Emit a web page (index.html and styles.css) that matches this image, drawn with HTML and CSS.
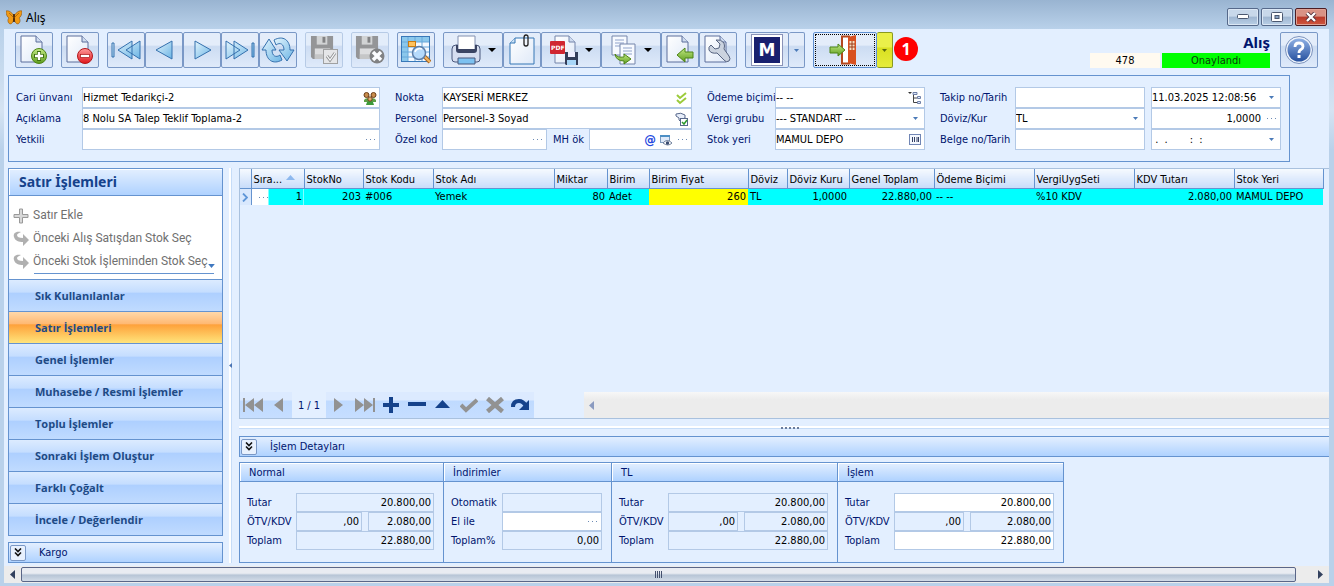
FILE: index.html
```html
<!DOCTYPE html>
<html lang="tr">
<head>
<meta charset="utf-8">
<title>Alış</title>
<meta name="viewport" content="width=device-width, initial-scale=1">
<link rel="stylesheet" href="styles.css">
</head>
<body>
<svg class="defs" aria-hidden="true">
  <defs>
    <linearGradient id="gBlue" x1="0" y1="0" x2="1" y2="1"><stop offset="0" stop-color="#e4f5fd"/><stop offset="1" stop-color="#6bb4e4"/></linearGradient>
    <linearGradient id="gPage" x1="0" y1="0" x2="1" y2="1"><stop offset="0" stop-color="#ffffff"/><stop offset="1" stop-color="#dfe9f8"/></linearGradient>
    <linearGradient id="gGreen" x1="0" y1="0" x2="0" y2="1"><stop offset="0" stop-color="#c3ea85"/><stop offset="1" stop-color="#5d9c1d"/></linearGradient>
    <linearGradient id="gRed" x1="0" y1="0" x2="0" y2="1"><stop offset="0" stop-color="#ff9a9a"/><stop offset="1" stop-color="#e0151b"/></linearGradient>
    <linearGradient id="gHelp" x1="0" y1="0" x2="0" y2="1"><stop offset="0" stop-color="#8fb0e4"/><stop offset="1" stop-color="#27519f"/></linearGradient>
    <symbol id="down" viewBox="0 0 5 3"><path d="M0 0h5L2.500 3z" fill="currentColor"/></symbol>
    <symbol id="page" viewBox="0 0 24 30"><path d="M1 1h15l6 6v20H1z" fill="url(#gPage)" stroke="#5c6f9c"/><path d="M16 1v6h6" fill="#cfdcf0" stroke="#5c6f9c"/></symbol>
    <symbol id="floppy" viewBox="0 0 26 26"><path d="M1 1h23v24H3l-2-2z" fill="#8c8c8c"/><path d="M7 1h11v9H7z" fill="#d0d0d0"/><path d="M13 2h3v6h-3z" fill="#777"/><path d="M5 14h16v11H5z" fill="#dcdcdc"/><path d="M5 20h16v5H5z" fill="#c2c2c2"/></symbol>
    <symbol id="chev" viewBox="0 0 8 9"><path d="M1 .5l3 3 3-3M1 4.500l3 3 3-3" fill="none" stroke="#111" stroke-width="1.600"/></symbol>
    <symbol id="redo" viewBox="0 0 16 16"><path d="M8 1C2 0 0 3 1 6c1 4 5 5 9 5v4l6-6-6-6v4C6 7 4 6 4 4c0-1 2-2 4-3z" fill="#b0b0b0"/></symbol>
  </defs>
</svg>

<div class="window">
  <header class="titlebar">
    <svg class="logo" width="16" height="15" viewBox="0 0 16 15"><path d="M8 6C6 2 2 0 0 1c0 3 1 6 3 7-2 2-1 5 1 6 2 0 3-2 4-5 1 3 2 5 4 5 2-1 3-4 1-6 2-1 3-4 3-7-2-1-6 1-8 5z" fill="#f09a16" stroke="#7a4206" stroke-width=".5"/><path d="M8 4v8" stroke="#3a1c04" stroke-width="1.600"/><path d="M8 8L3 3M8 8l5-5" stroke="#8a4c08" stroke-width=".6"/></svg>
    <h1 class="caption">Alış</h1>
    <div class="winbtns">
      <button class="winbtn" aria-label="Simge durumuna küçült"><svg width="12" height="6" viewBox="0 0 12 6"><rect x=".5" y=".5" width="11" height="4" rx="1" fill="#fff" stroke="#4b5870"/></svg></button>
      <button class="winbtn" aria-label="Ekranı kapla"><svg width="12" height="10" viewBox="0 0 12 10"><rect x=".5" y=".5" width="11" height="9" rx="1" fill="#fff" stroke="#4b5870"/><rect x="4" y="3.500" width="4" height="3" fill="#8aa3c4" stroke="#4b5870"/></svg></button>
      <button class="winbtn close" aria-label="Kapat"><svg width="12" height="10" viewBox="0 0 12 10"><path d="M2 1l8 8M10 1L2 9" stroke="#55303a" stroke-width="4"/><path d="M2 1l8 8M10 1L2 9" stroke="#fff" stroke-width="2.400"/></svg></button>
    </div>
  </header>

  <main class="client">
    <div class="toolbar">
      <button class="tool" aria-label="Yeni"><svg width="28" height="30" viewBox="0 0 28 30"><use href="#page" width="24" height="30"/><circle cx="19" cy="21" r="7.500" fill="url(#gGreen)" stroke="#4d8416"/><path d="M19 16v10M14 21h10" stroke="#3f7010" stroke-width="4"/><path d="M19 17v8M15 21h8" stroke="#fff" stroke-width="2.400"/></svg></button>
      <button class="tool" aria-label="Sil"><svg width="28" height="30" viewBox="0 0 28 30"><use href="#page" width="24" height="30"/><circle cx="19" cy="21" r="7.500" fill="url(#gRed)" stroke="#b3181c"/><rect x="14.500" y="19.500" width="9" height="3" fill="#fff" stroke="#a51518" stroke-width=".7"/></svg></button>
      <div class="group">
        <button class="tool" aria-label="İlk kayıt"><svg width="32" height="20" viewBox="0 0 32 20"><g fill="url(#gBlue)" stroke="#3571ae"><path d="M2 3h2v14H2zM22 1v18L8 10zM30 1v18l-14-9z"/></g></svg></button>
        <button class="tool" aria-label="Önceki kayıt"><svg width="20" height="20" viewBox="0 0 20 20"><path d="M18 1v18L2 10z" fill="url(#gBlue)" stroke="#3571ae"/></svg></button>
        <button class="tool" aria-label="Sonraki kayıt"><svg width="20" height="20" viewBox="0 0 20 20"><path d="M3 1v18l16-9z" fill="url(#gBlue)" stroke="#3571ae"/></svg></button>
        <button class="tool" aria-label="Son kayıt"><svg width="32" height="20" viewBox="0 0 32 20"><g fill="url(#gBlue)" stroke="#3571ae"><path d="M28 3h2v14h-2zM10 1v18l14-9zM2 1v18l14-9z"/></g></svg></button>
        <button class="tool" aria-label="Yenile"><svg width="34" height="28" viewBox="0 0 34 28"><g fill="url(#gBlue)" stroke="#3571ae"><path d="M13 4c9-5 16 0 16 10h4l-7 11-8-11h5c0-6-4-8-8-5z"/><path d="M21 24C12 29 5 24 5 14H1L8 3l7 11h-4c0 6 4 8 8 5z"/></g></svg></button>
      </div>
      <button class="tool off" disabled aria-label="Kaydet"><svg width="28" height="30" viewBox="0 0 28 30"><use href="#floppy" width="25" height="25"/><rect x="13.500" y="14.500" width="14" height="14" fill="#e6e6e6" stroke="#999"/><path d="M17 21l3 4 5-7" fill="none" stroke="#8a8a8a" stroke-width="3"/><path d="M17 21l3 4 5-7" fill="none" stroke="#fff" stroke-width="1.200"/></svg></button>
      <button class="tool off" disabled aria-label="Vazgeç"><svg width="30" height="30" viewBox="0 0 30 30"><use href="#floppy" width="25" height="25"/><circle cx="22" cy="21" r="7.500" fill="#777"/><path d="M18 17l8 8M26 17l-8 8" stroke="#fff" stroke-width="3.500"/></svg></button>
      <button class="tool" aria-label="Önizleme"><svg width="30" height="28" viewBox="0 0 30 28"><rect x=".5" y=".5" width="28" height="25" fill="#f4f9ff" stroke="#3878b8"/><path d="M1 1h27v5H1zM1 6h6v19H1z" fill="#8bc8ec"/><path d="M7 1v24M14 1v24M21 1v24M1 6h27M1 11h27M1 16h27M1 21h27" stroke="#69a8da"/><rect x="7.500" y="5.500" width="7" height="5" fill="#ffc25c" stroke="#c77a12"/><path d="M23 20l6 6" stroke="#a8651f" stroke-width="4"/><path d="M23 20l6 6" stroke="#f1b562" stroke-width="2"/><circle cx="18" cy="17" r="6.500" fill="#b5dafb" stroke="#5d7ea8" stroke-width="1.500"/><path d="M14 16c1-3 4-4 7-3" stroke="#fff" stroke-width="1.500" fill="none"/></svg></button>
      <div class="group">
        <button class="tool drop" aria-label="Yazdır"><svg width="32" height="31" viewBox="0 0 32 31"><path d="M2 14q0-4 4-4h20q4 0 4 4v10q0 3-3 3H5q-3 0-3-3z" fill="#d6def0" stroke="#4a587c"/><path d="M8 1h17v14H8z" fill="#fff" stroke="#8290b0"/><path d="M6 10h2v4h17v-4h2v5q0 3-3 3H9q-3 0-3-3z" fill="#3a4463"/><path d="M8 23h17v6H8z" fill="#7dc1f0" stroke="#4a587c"/></svg><svg class="car" width="8" height="4" viewBox="0 0 8 4"><path d="M0 0h8L4 4z"/></svg></button>
        <button class="tool" aria-label="Ekler"><svg width="28" height="32" viewBox="0 0 28 32"><path d="M2 9l5-5h19v26H2z" fill="url(#gPage)" stroke="#3577b5"/><path d="M7 4v5H2" fill="#cde2f6" stroke="#3577b5"/><path d="M16 5v5q0 2 2 2t2-2V3q0-2-2-2t-2 3v6" fill="none" stroke="#222" stroke-width="1.300"/></svg></button>
        <button class="tool drop" aria-label="PDF kaydet"><svg width="30" height="31" viewBox="0 0 30 31"><path d="M6 1h14l6 6v21H6z" fill="url(#gPage)" stroke="#7485ab"/><path d="M20 1v6h6" fill="#cfdcf0" stroke="#7485ab"/><rect x="1" y="6" width="15" height="13" rx="1" fill="#d02630"/><text class="pdf" x="2" y="15">PDF</text><path d="M16 17h13v13H17l-1-1z" fill="#333d59"/><path d="M19 17h7v5h-7z" fill="#eef"/><path d="M18 25h9v5h-9z" fill="#a8d6f8"/></svg><svg class="car" width="8" height="4" viewBox="0 0 8 4"><path d="M0 0h8L4 4z"/></svg></button>
        <button class="tool drop" aria-label="Kopyala"><svg width="28" height="31" viewBox="0 0 28 31"><path d="M2 1h15v19H2z" fill="#f7faff" stroke="#7485ab"/><path d="M5 5h9M5 8h9M5 11h9" stroke="#8fa2ca"/><path d="M10 9h15v20H10z" fill="#f7faff" stroke="#7485ab"/><path d="M13 13h9M13 16h9M13 19h9" stroke="#8fa2ca"/><path d="M5 19q2 4 9 3v-3l7 5-7 5v-3q-8 0-9-7z" fill="url(#gGreen)" stroke="#4d8416"/></svg><svg class="car" width="8" height="4" viewBox="0 0 8 4"><path d="M0 0h8L4 4z"/></svg></button>
        <button class="tool" aria-label="İçe aktar"><svg width="28" height="30" viewBox="0 0 28 30"><use href="#page" width="24" height="30"/><path d="M11 20l8-7v4h8v6h-8v4z" fill="url(#gGreen)" stroke="#4d8416"/></svg></button>
        <button class="tool" aria-label="Ayarlar"><svg width="28" height="30" viewBox="0 0 28 30"><use href="#page" width="24" height="30"/><path d="M7 10l4 4 4-1 1-4-4-4q5-1 8 3 1 3 0 6l5 7q2 3 0 5-3 2-5-1l-7-7q-6 1-8-3-1-3 2-5z" fill="#cbd3df" stroke="#566380"/></svg></button>
      </div>
      <div class="group">
        <button class="tool mbtn" aria-label="M"><span class="mlogo">M</span></button><button class="tool split" aria-label="M seçenekleri"><svg width="5" height="3"><use href="#down"/></svg></button>
      </div>
      <div class="group exit">
        <button class="tool exitbtn" aria-label="Çıkış"><svg width="30" height="30" viewBox="0 0 30 30"><path d="M13 1.500h7v27h-7z" fill="#fff" stroke="#b5481d" stroke-width="2"/><path d="M19 2l8-2v30l-8-2z" fill="#d8501f"/><path d="M20.500 6h5v9h-5z" fill="#f8ddbd"/><path d="M23 6v9M20 9h6M20 12h6" stroke="#9a3d1a"/><path d="M1 12h8V9l7 6-7 6v-3H1z" fill="url(#gGreen)" stroke="#4d8416"/></svg></button><button class="tool split hot" aria-label="Çıkış seçenekleri"><svg width="5" height="3"><use href="#down"/></svg></button>
      </div>
      <span class="callout">1</span>
      <div class="docinfo">
        <strong class="doctype">Alış</strong>
        <div class="docstate"><span class="docno">478</span><span class="approved">Onaylandı</span></div>
      </div>
      <button class="tool help" aria-label="Yardım"><svg width="30" height="30" viewBox="0 0 30 30"><circle cx="15" cy="15" r="13.500" fill="#eef4fc" stroke="#7b92bd"/><circle cx="15" cy="15" r="11.500" fill="url(#gHelp)"/><path d="M11 12q0-4 4-4t4 3.500q0 2-2 3-2 1-2 3.500" fill="none" stroke="#fff" stroke-width="2.800"/><rect x="13.500" y="20" width="3" height="3" fill="#fff"/></svg></button>
    </div>

    <form class="form">
      <label for="cari">Cari ünvanı</label>
      <div class="field"><input id="cari" value="Hizmet Tedarikçi-2"><button type="button" class="in" aria-label="Cari seç"><svg width="14" height="14" viewBox="0 0 14 14"><path d="M1 9q2-3 5-1v3H1zM8 8q3-2 5 1v2H8z" fill="#5ea046"/><path d="M4 11q3-2 6 0l1 3H3z" fill="#3e9a3a"/><circle cx="3.500" cy="4" r="2.500" fill="#c98d4d" stroke="#6b3d18"/><circle cx="10.500" cy="4" r="2.500" fill="#c98d4d" stroke="#6b3d18"/><circle cx="7" cy="8" r="2.200" fill="#e0b070" stroke="#6b3d18"/></svg></button></div>
      <label class="next" for="nokta">Nokta</label>
      <div class="field"><input id="nokta" value="KAYSERİ MERKEZ"><button type="button" class="in" aria-label="Nokta seç"><svg width="14" height="14" viewBox="0 0 14 14"><path d="M2 4l3 3 6-5M2 9l3 3 6-5" fill="none" stroke="#9ccb3b" stroke-width="2"/></svg></button></div>
      <label class="next" for="odeme">Ödeme biçimi</label>
      <div class="field"><input id="odeme" value="-- --"><button type="button" class="in" aria-label="Ödeme biçimi seç"><svg width="14" height="14" viewBox="0 0 14 14"><path d="M0 1h4L2 3z" fill="#333"/><path d="M5.500 3v8.500H9M5.500 7H9" fill="none" stroke="#444"/><path d="M5 1.500h4v2H5zM9.500 5.500h3v2h-3zM9.500 10.500h3v2h-3z" fill="#dce8fb" stroke="#6f7fa6"/></svg></button></div>
      <label class="next" for="takip">Takip no/Tarih</label>
      <div class="field"><input id="takip"></div>
      <div class="field last"><input aria-label="Takip tarihi" value="11.03.2025 12:08:56"><button type="button" class="in" aria-label="Tarih seç"><svg width="5" height="3"><use href="#down"/></svg></button></div>

      <label for="acik">Açıklama</label>
      <div class="field"><input id="acik" value="8 Nolu SA Talep Teklif Toplama-2"></div>
      <label class="next" for="pers">Personel</label>
      <div class="field"><input id="pers" value="Personel-3 Soyad"><button type="button" class="in" aria-label="Personel seç"><svg width="14" height="14" viewBox="0 0 14 14"><path d="M1 2q5-2 9 1v3L7 7v4L4 8V6L1 4z" fill="#e8eefa" stroke="#59698c"/><rect x="5.500" y="6.500" width="7" height="7" fill="#fff" stroke="#59698c"/><path d="M7 10l2 2 3-4" fill="none" stroke="#2b9a2b" stroke-width="1.500"/></svg></button></div>
      <label class="next" for="vergi">Vergi grubu</label>
      <div class="field"><select id="vergi"><option>--- STANDART ---</option></select><svg class="arrow" width="5" height="3"><use href="#down"/></svg></div>
      <label class="next" for="doviz">Döviz/Kur</label>
      <div class="field"><select id="doviz"><option>TL</option></select><svg class="arrow" width="5" height="3"><use href="#down"/></svg></div>
      <div class="field last num"><input aria-label="Kur" value="1,0000"><button type="button" class="in dots" aria-label="Kur seç"><i></i></button></div>

      <label for="yetkili">Yetkili</label>
      <div class="field"><input id="yetkili"><button type="button" class="in dots" aria-label="Yetkili seç"><i></i></button></div>
      <label class="next" for="ozel">Özel kod</label>
      <div class="pair">
        <div class="field"><input id="ozel"><button type="button" class="in dots" aria-label="Özel kod seç"><i></i></button></div>
        <label for="mhok">MH ök</label>
        <div class="field"><input id="mhok"><button type="button" class="in at" aria-label="E-posta">@</button><button type="button" class="in" aria-label="Görüntüle"><svg width="14" height="14" viewBox="0 0 14 14"><rect x="1.500" y="2.500" width="9" height="7" fill="#dfeafa" stroke="#7b99bd"/><path d="M1 2h10v2H1z" fill="#4c8fc5"/><path d="M4 10q4-5 9 0-4 4-9 0z" fill="#fff" stroke="#6f7f9c"/><circle cx="8.500" cy="10" r="1.700" fill="#3b4c70"/></svg></button><button type="button" class="in dots" aria-label="MH ök seç"><i></i></button></div>
      </div>
      <label class="next" for="stok">Stok yeri</label>
      <div class="field"><input id="stok" value="MAMUL DEPO"><button type="button" class="in" aria-label="Stok yeri seç"><svg width="14" height="12" viewBox="0 0 14 12"><rect x="1.500" y=".5" width="11" height="10" fill="#f4f8ff" stroke="#7186b5"/><path d="M4.500 3v5M6.500 3v5M9 3v5" stroke="#333f63"/><path d="M10.500 3v5" stroke="#333f63"/></svg></button></div>
      <label class="next" for="belge">Belge no/Tarih</label>
      <div class="field"><input id="belge"></div>
      <div class="field last"><input aria-label="Belge tarihi" value=" .  .       :  :"><button type="button" class="in" aria-label="Tarih seç"><svg width="5" height="3"><use href="#down"/></svg></button></div>
    </form>

    <div class="work">
      <aside class="side">
        <nav class="navbar">
          <h2 class="navhead">Satır İşlemleri</h2>
          <div class="links">
            <button class="link"><svg width="16" height="16" viewBox="0 0 16 16"><path d="M6.500 1h3v5.500H15v3H9.500V15h-3V9.500H1v-3h5.500z" fill="#d8d8d8" stroke="#999"/></svg>Satır Ekle</button>
            <button class="link"><svg width="16" height="16"><use href="#redo"/></svg>Önceki Alış Satışdan Stok Seç</button>
            <button class="link"><svg width="16" height="16"><use href="#redo"/></svg>Önceki Stok İşleminden Stok Seç<svg class="more" width="7" height="4"><use href="#down"/></svg></button>
            <div class="rule"></div>
          </div>
          <button class="cat">Sık Kullanılanlar</button>
          <button class="cat on">Satır İşlemleri</button>
          <button class="cat">Genel İşlemler</button>
          <button class="cat">Muhasebe / Resmi İşlemler</button>
          <button class="cat">Toplu İşlemler</button>
          <button class="cat">Sonraki İşlem Oluştur</button>
          <button class="cat">Farklı Çoğalt</button>
          <button class="cat">İncele / Değerlendir</button>
        </nav>
        <div class="bar"><button class="exp" aria-label="Kargo aç"><svg width="8" height="9"><use href="#chev"/></svg></button><span>Kargo</span></div>
      </aside>
      <div class="vsplit"><svg width="3" height="5" viewBox="0 0 3 5"><path d="M3 0v5L0 2.500z" fill="#4a74b4"/></svg></div>

      <section class="content">
        <div class="gridbox">
          <table class="grid">
            <colgroup><col class="c11"><col class="c53"><col class="c59"><col class="c70"><col class="c121"><col class="c53"><col class="c42"><col class="c99"><col class="c39"><col class="c62"><col class="c85"><col class="c100"><col class="c100"><col class="c100"><col class="c89"><col></colgroup>
            <thead><tr><th></th><th>Sıra... <svg class="sort" width="9" height="5" viewBox="0 0 9 5"><path d="M4.500 0L9 5H0z" fill="#8db8ee"/></svg></th><th>StokNo</th><th>Stok Kodu</th><th>Stok Adı</th><th>Miktar</th><th>Birim</th><th>Birim Fiyat</th><th>Döviz</th><th>Döviz Kuru</th><th>Genel Toplam</th><th>Ödeme Biçimi</th><th>VergiUygSeti</th><th>KDV Tutarı</th><th>Stok Yeri</th><td class="rest"></td></tr></thead>
            <tbody><tr><td class="ind"><svg width="6" height="9" viewBox="0 0 6 9"><path d="M1 .5l4 4-4 4" fill="none" stroke="#5f96d8" stroke-width="1.800"/></svg></td><td class="first"><div class="seq dots"><i></i><span>1</span></div></td><td class="r">203</td><td>#006</td><td>Yemek</td><td class="r">80</td><td>Adet</td><td class="r yel">260</td><td>TL</td><td class="r">1,0000</td><td class="r">22.880,00</td><td>-- --</td><td>%10 KDV</td><td class="r">2.080,00</td><td>MAMUL DEPO</td><td class="rest"></td></tr></tbody>
          </table>
          <div class="gridfoot">
            <div class="recnav">
              <button aria-label="İlk"><svg width="20" height="16" viewBox="0 0 20 16"><path d="M0 1h2v14H0zM11 1v14L2 8zM20 1v14l-9-7z" fill="#929292"/></svg></button>
              <button aria-label="Önceki"><svg width="9" height="16" viewBox="0 0 9 16"><path d="M9 1v14L0 8z" fill="#929292"/></svg></button>
              <span class="pos">1 / 1</span>
              <button aria-label="Sonraki"><svg width="9" height="16" viewBox="0 0 9 16"><path d="M0 1v14l9-7z" fill="#929292"/></svg></button>
              <button aria-label="Son"><svg width="20" height="16" viewBox="0 0 20 16"><path d="M18 1h2v14h-2zM9 1v14l9-7zM0 1v14l9-7z" fill="#929292"/></svg></button>
              <button aria-label="Ekle"><svg width="16" height="16" viewBox="0 0 16 16"><path d="M6 0h4v6h6v4h-6v6H6v-6H0V6h6z" fill="#15428b"/></svg></button>
              <button aria-label="Çıkar"><svg width="18" height="16" viewBox="0 0 18 16"><path d="M0 5h18v4H0z" fill="#15428b"/></svg></button>
              <button aria-label="Düzenle"><svg width="15" height="16" viewBox="0 0 15 16"><path d="M7.500 3L15 11H0z" fill="#15428b"/></svg></button>
              <button aria-label="Onayla"><svg width="18" height="16" viewBox="0 0 18 16"><path d="M1 8l5 5L17 3" fill="none" stroke="#929292" stroke-width="4"/></svg></button>
              <button aria-label="İptal"><svg width="18" height="16" viewBox="0 0 18 16"><path d="M1.500 1.500l15 13M16.500 1.500l-15 13" stroke="#929292" stroke-width="4.500"/></svg></button>
              <button aria-label="Yenile"><svg width="19" height="16" viewBox="0 0 19 16"><path d="M2 10Q2 4 8 4q4 0 7 5" fill="none" stroke="#15428b" stroke-width="4"/><path d="M18 3v10H8z" fill="#15428b"/></svg></button>
            </div>
            <div class="hscroll"><svg width="5" height="9" viewBox="0 0 5 9"><path d="M5 0v9L0 4.500z" fill="#8b9bc0"/></svg></div>
          </div>
        </div>
        <div class="hsplit"><i></i></div>
        <div class="bar wide"><button class="exp" aria-label="İşlem detayları aç"><svg width="8" height="9"><use href="#chev"/></svg></button><span>İşlem Detayları</span></div>
        <div class="panels">
          <fieldset class="panel w204"><legend>Normal</legend><div class="rows">
            <label for="n1">Tutar</label><input class="box full" id="n1" readonly value="20.800,00">
            <label for="n2">ÖTV/KDV</label><input class="box" id="n2" readonly value=",00"><input class="box" aria-label="Normal KDV" readonly value="2.080,00">
            <label for="n3">Toplam</label><input class="box full" id="n3" readonly value="22.880,00"></div></fieldset>
          <fieldset class="panel w168"><legend>İndirimler</legend><div class="rows">
            <label for="i1">Otomatik</label><input class="box full" id="i1" readonly>
            <label for="i2">El ile</label><div class="field short full"><input id="i2"><button class="in dots" aria-label="İndirim seç"><i></i></button></div>
            <label for="i3">Toplam%</label><input class="box full" id="i3" readonly value="0,00"></div></fieldset>
          <fieldset class="panel w226"><legend>TL</legend><div class="rows">
            <label for="t1">Tutar</label><input class="box full" id="t1" readonly value="20.800,00">
            <label for="t2">ÖTV/KDV</label><input class="box" id="t2" readonly value=",00"><input class="box" aria-label="TL KDV" readonly value="2.080,00">
            <label for="t3">Toplam</label><input class="box full" id="t3" readonly value="22.880,00"></div></fieldset>
          <fieldset class="panel w226"><legend>İşlem</legend><div class="rows">
            <label for="s1">Tutar</label><input class="box full edit" id="s1" value="20.800,00">
            <label for="s2">ÖTV/KDV</label><input class="box" id="s2" readonly value=",00"><input class="box" aria-label="İşlem KDV" readonly value="2.080,00">
            <label for="s3">Toplam</label><input class="box full edit" id="s3" value="22.880,00"></div></fieldset>
        </div>
      </section>
    </div>

    <div class="scroll">
      <button aria-label="Sola kaydır"><svg width="5" height="9" viewBox="0 0 5 9"><path d="M5 0v9L0 4.500z" fill="#33415e"/></svg></button>
      <div class="thumb"><i></i></div>
      <button class="rt" aria-label="Sağa kaydır"><svg width="5" height="9" viewBox="0 0 5 9"><path d="M0 0v9l5-4.500z" fill="#33415e"/></svg></button>
    </div>
  </main>
</div>
</body>
</html>
```
FILE: styles.css
```css
* { box-sizing: border-box; }
body { margin: 0; font: 11px/14px "DejaVu Sans Condensed", "DejaVu Sans", sans-serif; color: #000; }
button, input, select { font: inherit; color: inherit; margin: 0; padding: 0; border: 0; background: none; border-radius: 0; min-width: 0; outline: 0; }
button { display: flex; align-items: center; justify-content: center; }
svg { display: block; flex: none; }
.defs { position: absolute; width: 0; height: 0; }

.window { min-height: 100vh; display: flex; flex-direction: column; padding: 0 5px 3px 4px; background: linear-gradient(#99b4d1 0, #b9d1ea 29px, #d5e3f2 110px, #b9d1ea 150px); }
.titlebar { height: 29px; display: flex; align-items: flex-start; padding-left: 2px; }
.logo { margin-top: 10px; }
.caption { margin: 10px 0 0 4px; font: 12px/16px "Noto Sans", sans-serif; }
.winbtns { margin: 8px 2px 0 auto; display: flex; gap: 2px; }
.winbtn { width: 32px; height: 18px; border: 1px solid #56698a; border-radius: 2px; background: linear-gradient(#c8d8ea 0 45%, #9fb6d1 50%, #b9cfe6); box-shadow: inset 0 0 0 1px #dbe7f4; }
.winbtn.close { background: linear-gradient(#d99285 0 45%, #b8392a 50%, #d0573f); border-color: #4c1d24; box-shadow: inset 0 0 0 1px #dfa295; }

.client { flex: 1; display: flex; flex-direction: column; background: #e3efff; }
.toolbar { display: flex; align-items: flex-start; gap: 8px; padding: 3px 11px 0; height: 46px; }
.group { display: flex; }
.tool { width: 38px; height: 36px; border: 1px solid #7a98c6; border-radius: 2px; background: linear-gradient(#e4edfa 0 35%, #ccdcf2 40%, #dfeafa); }
.tool.drop { width: 60px; gap: 6px; }
.tool.off { border-color: #b3c8e4; opacity: .9; }
.tool.split { width: 16px; color: #4a7ab8; border-left: 0; }
.mbtn { width: 44px; }
.mlogo { width: 30px; height: 30px; border: 2px solid #fff; outline: 1px solid #8a93b8; background: #18206f; color: #fff; font: bold 17px/26px "DejaVu Sans", sans-serif; }
.tool.exitbtn { width: 64px; border-color: #5f8fd0; outline: 1px dotted #000; outline-offset: -3px; padding-right: 2px; }
.tool.hot { background: linear-gradient(#eaf04a 0 40%, #d9e021 45%, #e6ec3a); color: #5b6a10; border-color: #8a9a20; }
.pdf { font: bold 6px "DejaVu Sans", sans-serif; fill: #fff; }
.callout { margin: 5px 0 0 -7px; width: 24px; height: 24px; border-radius: 50%; background: #f00; color: #fff; font: bold 16px/24px "Noto Sans", sans-serif; text-align: center; }
.docinfo { margin-left: auto; display: flex; flex-direction: column; align-items: flex-end; margin-right: 2px; }
.doctype { font: bold 15px/21px "Noto Sans", sans-serif; color: #00156e; }
.docstate { display: flex; gap: 2px; text-align: center; line-height: 16px; height: 15px; }
.docno { width: 70px; background: #fffaf0; }
.approved { width: 108px; background: #0f0; color: #0a3a0a; }

.form { margin: 0 39px 6px 4px; height: 87px; padding: 11px 8px 0 7px; border: 1px solid #6593cf; display: grid; grid-template-columns: 66px minmax(0, 298fr) 62px minmax(0, 250fr) 83px minmax(0, 150fr) 90px minmax(0, 130fr) 6px minmax(0, 130fr); grid-auto-rows: 21px; align-items: center; color: #00156e; }
.form label { white-space: nowrap; }
.form .next { padding-left: 15px; }
.form .last { grid-column: 10; }
.field { display: flex; align-items: center; height: 21px; border: 1px solid #b3c9e6; background: #fff; color: #000; min-width: 0; padding-right: 1px; }
.field input, .field select { flex: 1; width: 0; height: 100%; padding: 0; appearance: none; }
.field input { white-space: pre; }
.field.num input { text-align: right; padding-right: 2px; }
.in { width: 16px; height: 17px; color: #4a7ab8; }
.arrow { color: #4a7ab8; margin: 0 5px; pointer-events: none; }
.dots i { width: 9px; height: 1px; background: repeating-linear-gradient(90deg, #6d8bb5 0 1px, transparent 1px 4px); }
.at { color: #2448e0; font: bold 13px/14px "DejaVu Sans Condensed", sans-serif; }
.pair { display: grid; grid-template-columns: 106fr auto 104fr; align-items: center; }
.pair label { padding: 0 5px 0 6px; }

.work { flex: 1; display: flex; min-height: 0; }
.side { width: 215px; margin-left: 4px; display: flex; flex-direction: column; gap: 6px; flex: none; }
.navbar { border: 1px solid #6593cf; background: #fff; }
.navhead { margin: 0; height: 27px; padding-left: 10px; border-bottom: 1px solid #6593cf; background: linear-gradient(#e3efff, #afd2ff); font: bold 14px/26px "Noto Sans", sans-serif; color: #15428b; box-shadow: inset 1px 1px #fff; }
.links { height: 83px; padding: 8px 4px 0; }
.link { height: 23px; gap: 4px; font: 12px/23px Roboto, sans-serif; color: #707070; white-space: nowrap; }
.more { color: #3f78c0; margin-top: 8px; margin-left: -4px; }
.rule { height: 1px; background: #6593cf; margin: 0 4px 0 21px; }
.cat { width: 100%; height: 32px; justify-content: flex-start; padding-left: 26px; border-top: 1px solid #6593cf; background: linear-gradient(#dcebff 0, #c4ddff 40%, #adcfff 41%, #c0dbff); font: bold 11px/30px "Open Sans", sans-serif; color: #1e4a85; }
.cat.on { background: linear-gradient(#ffd8aa 0, #ffb871 39%, #fea13a 41%, #ffe47b); }
.bar { height: 21px; display: flex; align-items: center; border: 1px solid #6593cf; background: linear-gradient(#e3efff, #afd2ff); color: #00156e; }
.exp { width: 16px; height: 16px; margin: 0 13px 0 1px; border: 1px solid #7a98c6; border-radius: 2px; background: #e8f1fe; }
.vsplit { width: 16px; flex: none; display: flex; align-items: center; padding-left: 6px; background: linear-gradient(90deg, transparent 6px, #fff 6px 8px, #c5dcf8 8px 9px, transparent 9px); }

.content { flex: 1; min-width: 0; display: flex; flex-direction: column; }
.gridbox { flex: 1; display: flex; flex-direction: column; justify-content: space-between; border: 1px solid #a9c1de; border-width: 1px 0 1px 1px; }
.grid { width: 100%; border-collapse: collapse; table-layout: fixed; }
.grid th { height: 19px; padding: 3px 2px 0; border-right: 1px solid #6593cf; border-bottom: 1px solid #6593cf; background: linear-gradient(#f6faff, #c8dcfa); text-align: left; font-weight: normal; white-space: nowrap; overflow: hidden; }
.grid td { height: 17px; padding: 1px 2px 0; background: #0ff; white-space: nowrap; }
.grid td.rest { background: none; }
.grid .r { text-align: right; }
.grid td.ind { background: #d9e8fd; border-right: 1px solid #6593cf; }
.grid td.first { background: linear-gradient(90deg, #fff 17px, #0ff 17px); }
.seq { display: flex; align-items: center; justify-content: space-between; padding-left: 5px; }
.grid td.yel { background: #ff0; }
.sort { display: inline-block; margin: 0 0 3px 1px; }
.c11 { width: 11px; } .c53 { width: 53px; } .c59 { width: 59px; } .c70 { width: 70px; } .c121 { width: 121px; } .c42 { width: 42px; } .c99 { width: 99px; } .c39 { width: 39px; } .c62 { width: 62px; } .c85 { width: 85px; } .c100 { width: 100px; } .c89 { width: 89px; }
.gridfoot { display: flex; height: 26px; gap: 50px; }
.recnav { display: flex; align-items: stretch; width: 294px; background: linear-gradient(#dceaff 0 8px, #bfdaff 9px, #c6deff); }
.recnav button { width: 26px; flex: none; padding-right: 1px; }
.pos { width: 34px; background: #e3efff; text-align: center; line-height: 27px; color: #00156e; }
.hscroll { flex: 1; display: flex; align-items: center; padding-left: 5px; background: linear-gradient(#f7f7f7, #ececec 30%); }
.hsplit { height: 17px; display: flex; align-items: center; justify-content: center; padding-left: 12px; background: linear-gradient(transparent 7px, #fff 7px 9px, #c5dcf8 9px 10px, transparent 10px); }
.hsplit i { width: 19px; height: 2px; background: repeating-linear-gradient(90deg, #6a7c9c 0 2px, transparent 2px 4px); }
.bar.wide { border-right: 0; margin-bottom: 5px; }
.panels { display: flex; height: 101px; }
.panel { margin: 0 -1px 0 0; padding: 0; border: 1px solid #6593cf; min-width: 0; }
.panel legend { float: left; width: 100%; height: 19px; padding: 0 0 0 9px; line-height: 20px; border-bottom: 1px solid #6593cf; background: linear-gradient(#e3efff, #afd2ff); color: #00156e; box-shadow: inset 1px 1px #fff; }
.w204 { width: 205px; } .w168 { width: 169px; } .w226 { width: 227px; }
.rows { clear: both; padding: 11px 9px 0 7px; display: grid; grid-template-columns: 49px minmax(0, 66fr) 6px minmax(0, 66fr); grid-auto-rows: 19px; align-items: center; color: #00156e; }
.w168 .rows { grid-template-columns: 51px 1fr 6px 1fr; }
.w226 .rows { grid-template-columns: 49px minmax(0, 70fr) 6px minmax(0, 84fr); }
.box { width: 100%; height: 19px; padding: 0 2px; border: 1px solid #b3c9e6; background: #e3efff; color: #000; text-align: right; }
.box + .box { grid-column: 4; }
.full { grid-column: 2 / span 3; }
.edit, .field.short { background: #fff; }
.field.short { height: 19px; }

.scroll { height: 17px; margin-top: 3px; display: flex; background: #ececec; }
.scroll button { width: 17px; }
.thumb { flex: 1; display: flex; align-items: center; justify-content: center; border: 1px solid #5a6688; border-radius: 2px; background: linear-gradient(#e9ecf2 0 40%, #b7c5d6 55%, #d3dce8); margin: 1px 16px 1px 0; }
.thumb i { width: 8px; height: 7px; background: repeating-linear-gradient(90deg, #44506e 0 1px, transparent 1px 2px); }
```
